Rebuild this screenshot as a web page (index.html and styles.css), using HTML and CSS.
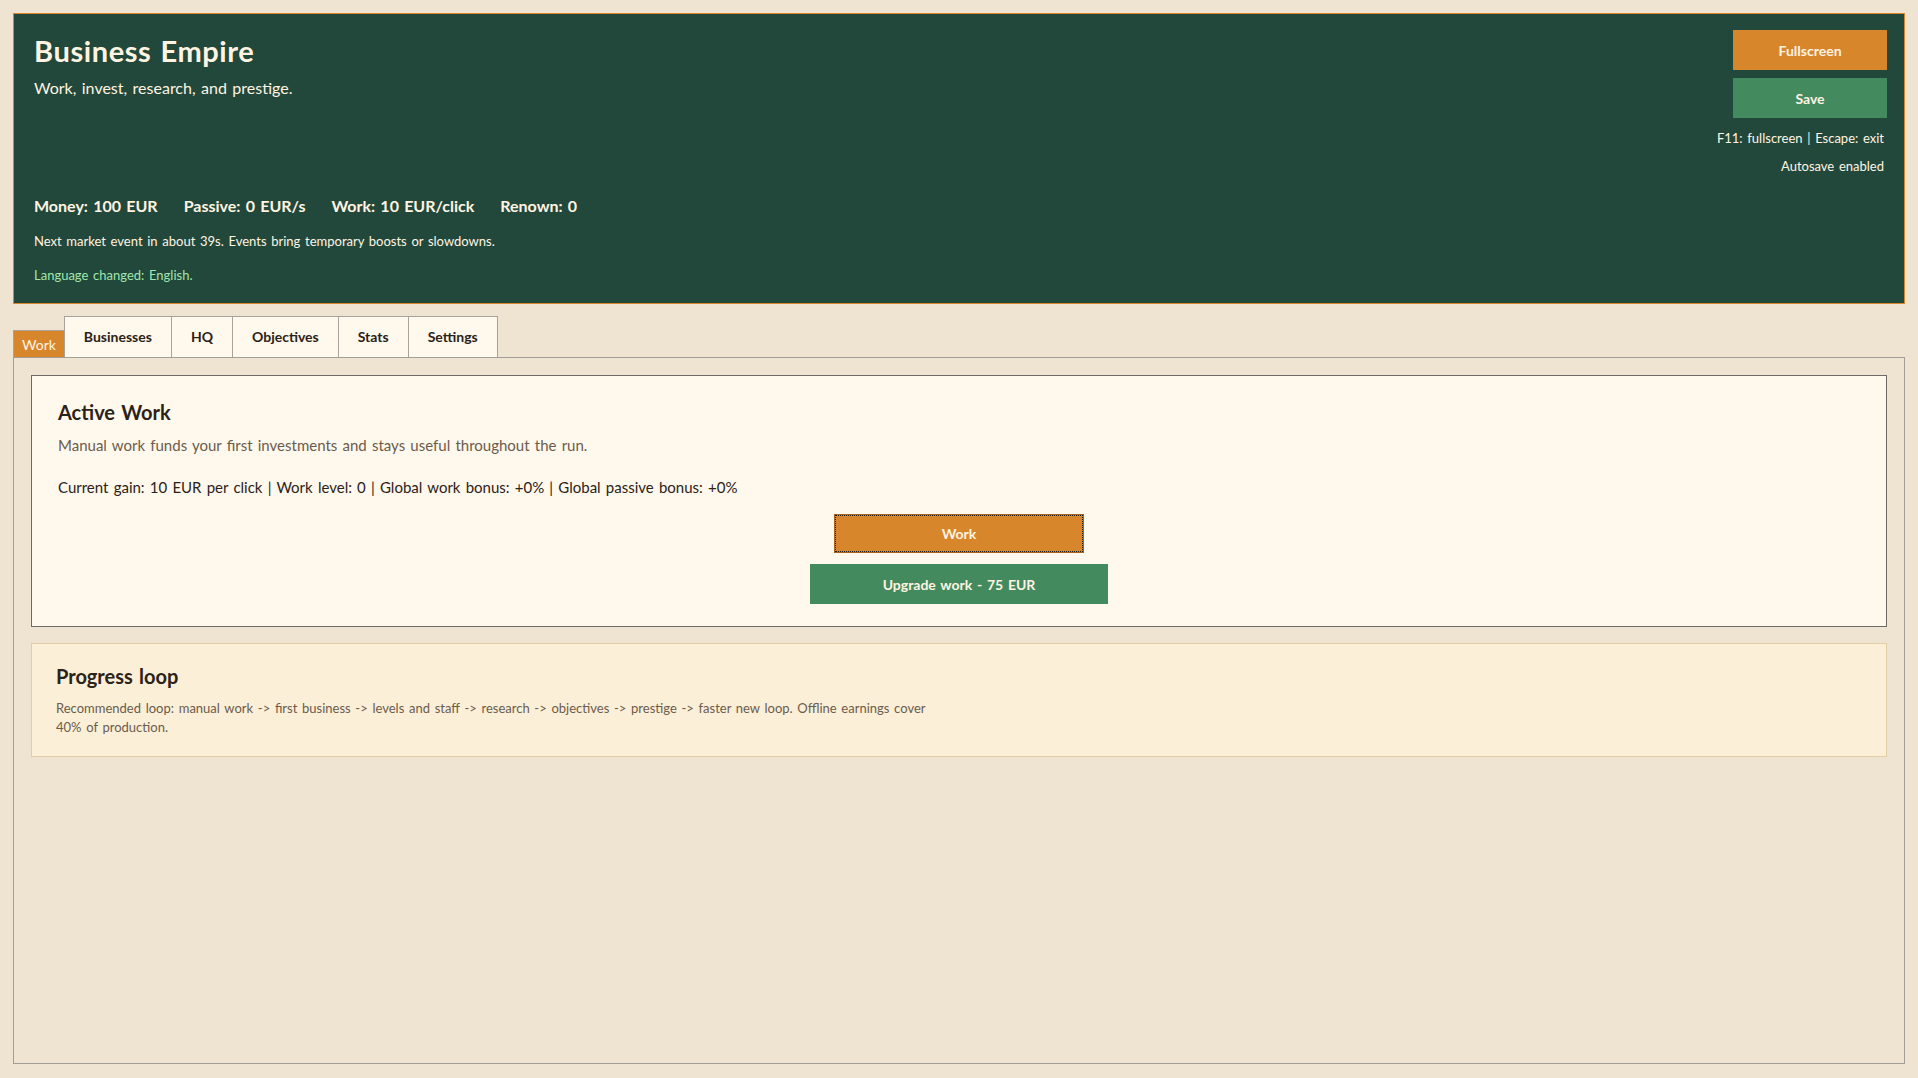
FILE: index.html
```html
<!DOCTYPE html>
<html lang="en">
<head>
    <meta charset="UTF-8">
    <meta name="viewport" content="width=device-width, initial-scale=1.0">
    <title>Business Empire</title>
    <link rel="stylesheet" href="styles.css">
</head>
<body>
    <header class="topbar">
        <div class="topbar-row">
            <div class="brand">
                <h1>Business Empire</h1>
                <p class="tagline">Work, invest, research, and prestige.</p>
            </div>
            <div class="controls">
                <button class="btn btn-orange btn-small">Fullscreen</button>
                <button class="btn btn-green btn-small save-button">Save</button>
                <p class="hint">F11: fullscreen | Escape: exit</p>
                <p class="hint hint-last">Autosave enabled</p>
            </div>
        </div>
        <div class="stats">
            <span>Money: 100 EUR</span>
            <span>Passive: 0 EUR/s</span>
            <span>Work: 10 EUR/click</span>
            <span>Renown: 0</span>
        </div>
        <p class="event">Next market event in about 39s. Events bring temporary boosts or slowdowns.</p>
        <p class="notice">Language changed: English.</p>
    </header>

    <nav class="tabs">
        <button class="tab active">Work</button>
        <button class="tab">Businesses</button>
        <button class="tab">HQ</button>
        <button class="tab">Objectives</button>
        <button class="tab">Stats</button>
        <button class="tab">Settings</button>
    </nav>

    <main class="panel">
        <section class="card card-work">
            <h2>Active Work</h2>
            <p class="lead">Manual work funds your first investments and stays useful throughout the run.</p>
            <p class="gain">Current gain: 10 EUR per click | Work level: 0 | Global work bonus: +0% | Global passive bonus: +0%</p>
            <div class="actions">
                <button class="btn btn-orange btn-work">Work</button>
                <button class="btn btn-green btn-upgrade">Upgrade work - 75 EUR</button>
            </div>
        </section>

        <section class="card card-info">
            <h2>Progress loop</h2>
            <p class="loop-text">Recommended loop: manual work -&gt; first business -&gt; levels and staff -&gt; research -&gt; objectives -&gt; prestige -&gt; faster new loop. Offline earnings cover 40% of production.</p>
        </section>
    </main>
</body>
</html>
```
FILE: styles.css
```css
* {
    box-sizing: border-box;
}

body {
    margin: 0;
    height: 100vh;
    padding: 13px 13px 14px 13px;
    display: flex;
    flex-direction: column;
    background-color: #efe4d1;
    color: #2b2218;
    font-family: Lato, "Liberation Sans", sans-serif;
    word-spacing: 0.085em;
}

/* top bar */
.topbar {
    background-color: #22483b;
    border: 1px solid #d8862b;
    color: #fff4e2;
    padding: 16px 17px 18px 20px;
}

.topbar-row {
    display: flex;
    justify-content: space-between;
    align-items: flex-start;
}

.topbar h1 {
    margin: 0;
    padding-top: 2px;
    font-size: 29px;
    line-height: 38px;
    font-weight: 700;
    letter-spacing: 0.6px;
}

.tagline {
    margin: 7px 0 0;
    font-size: 16px;
    line-height: 22px;
}

.controls {
    display: flex;
    flex-direction: column;
    align-items: flex-end;
}

.hint {
    margin: 10px 3px 0 0;
    font-size: 13px;
    line-height: 20px;
}

.hint-last {
    margin-top: 8px;
}

.stats {
    display: flex;
    gap: 26px;
    margin-top: 19px;
    font-size: 16px;
    line-height: 22px;
    font-weight: 700;
}

.event,
.notice {
    margin: 14px 0 0;
    font-size: 13px;
    line-height: 20px;
}

.notice {
    color: #a0e6ac;
}

/* buttons */
.btn {
    border: none;
    font-family: inherit;
    font-weight: 700;
    word-spacing: inherit;
    color: #fff4e2;
    cursor: pointer;
}

.btn-orange {
    background-color: #d8862b;
}

.btn-green {
    background-color: #438a5e;
}

.btn-small {
    width: 154px;
    height: 40px;
    font-size: 14px;
}

.save-button {
    margin-top: 8px;
}

/* tabs */
.tabs {
    display: flex;
    align-items: flex-end;
    margin-top: 12px;
}

.tab {
    margin-left: -1px;
    padding: 10px 19px;
    background-color: #fff8ec;
    border: 1px solid #a8a29c;
    border-bottom: none;
    font-family: inherit;
    font-size: 14px;
    line-height: 20px;
    font-weight: 700;
    color: #2b2218;
}

.tab.active {
    margin-left: 0;
    padding: 5px 8px 3px;
    line-height: 18px;
    background-color: #d8862b;
    color: #fff4e2;
    font-weight: 400;
}

/* content */
.panel {
    flex: 1;
    display: flex;
    flex-direction: column;
    gap: 16px;
    padding: 17px;
    border: 1px solid #a39d97;
}

.card h2 {
    margin: 0;
    font-size: 20px;
    line-height: 24px;
    font-weight: 700;
}

.card-work {
    padding: 24px 26px 22px;
    background-color: #fff8ec;
    border: 1px solid #6e6a66;
}

.lead {
    margin: 10px 0 0;
    font-size: 15px;
    line-height: 22px;
    color: #6b5c4c;
}

.gain {
    margin: 20px 0 0;
    font-size: 15px;
    line-height: 22px;
}

.actions {
    display: flex;
    flex-direction: column;
    align-items: center;
    gap: 11px;
    margin-top: 16px;
}

.btn-work {
    width: 250px;
    height: 39px;
    border: 1px solid #a8621c;
    outline: 1px dotted #1b1b1b;
    outline-offset: -2px;
    font-size: 14px;
}

.btn-upgrade {
    width: 298px;
    height: 40px;
    font-size: 14px;
}

.card-info {
    padding: 20px 24px 19px;
    background-color: #fbefd8;
    border: 1px solid #e3cda4;
}

.loop-text {
    max-width: 885px;
    margin: 11px 0 0;
    font-size: 13px;
    line-height: 19px;
    color: #6b5c4c;
}
```
